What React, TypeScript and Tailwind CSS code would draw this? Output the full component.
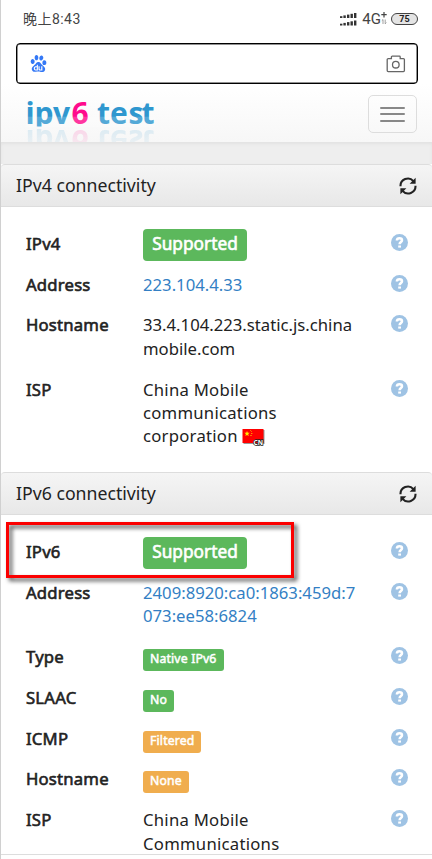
import { type ReactNode } from "react";
import { SiBaidu } from "react-icons/si";

interface RowProps {
  label: string;
  children: ReactNode;
}

function SignalBars() {
  const rows = [0, 7.5];
  return (
    <svg width="17" height="13" viewBox="0 0 17 13" fill="#333">
      {rows.map((y) => (
        <g key={y}>
          <rect x="0" y={y + 3.2} width="2.4" height="1.8" />
          <rect x="3.4" y={y + 2.4} width="2.4" height="2.6" />
          <rect x="7" y={y + 1.6} width="2.4" height="3.4" />
          <rect x="10.5" y={y + 0.8} width="2.4" height="4.2" />
          <rect x="14" y={y} width="2.4" height="5" />
        </g>
      ))}
    </svg>
  );
}

function CameraIcon() {
  return (
    <svg width="20" height="18" viewBox="0 0 20 18" fill="none" stroke="#666" strokeWidth="1.3">
      <path d="M2.2 3.600h3.200V2a.8.8 0 0 1 .8-.8h7.200a.8.8 0 0 1 .8.8v1.600h3.200a1 1 0 0 1 1 1v11a1 1 0 0 1-1 1H2.200a1 1 0 0 1-1-1v-11a1 1 0 0 1 1-1z" />
      <circle cx="9.800" cy="9.700" r="3.300" />
    </svg>
  );
}

function RefreshIcon() {
  return (
    <svg width="18" height="18" viewBox="0 0 18 18">
      <g fill="none" stroke="#222" strokeWidth="2.100">
        <path d="M1.500 9.200A7.300 7.300 0 0 1 14.400 4.200" />
        <path d="M16.500 8.800A7.300 7.300 0 0 1 3.600 13.800" />
      </g>
      <path d="M16.600 0.800v5.900h-6z" fill="#222" />
      <path d="M1.400 17.200v-5.900h6z" fill="#222" />
    </svg>
  );
}

function HelpIcon() {
  return (
    <svg width="17" height="17" viewBox="0 0 17 17">
      <circle cx="8.500" cy="8.500" r="8.500" fill="#9fc3e4" />
      <path d="M5.900 6.400C5.900 4.700 7 4.200 8.500 4.200C10.200 4.200 11 5 11 6.200C11 8 8.600 8 8.600 10.300" fill="none" stroke="#fff" strokeWidth="2.500" />
      <rect x="7.200" y="11.500" width="2.800" height="2.100" fill="#fff" />
    </svg>
  );
}

function Logo() {
  const letters = (
    <>
      <text x="-0.5 8.500 27" y="27.500">ipv</text>
      <text x="45.500" y="27.500" fill="#ff0a8c">6</text>
      <text x="71 84 102.500 115.500" y="27.500">test</text>
    </>
  );
  return (
    <svg width="129" height="46" viewBox="0 0 129 46" className="font-['Open_Sans'] text-[30px] font-bold">
      <defs>
        <linearGradient id="fade" x1="0" y1="32" x2="0" y2="46" gradientUnits="userSpaceOnUse">
          <stop offset="0" stopColor="#fff" stopOpacity="0.150" />
          <stop offset="1" stopColor="#fff" stopOpacity="0.070" />
        </linearGradient>
        <mask id="mirror" maskUnits="userSpaceOnUse" x="0" y="33" width="129" height="13">
          <rect y="33" width="129" height="13" fill="url(#fade)" />
        </mask>
        <clipPath id="top"><rect width="129" height="30.500" /></clipPath>
      </defs>
      <g clipPath="url(#top)" fill="#2f97cf">{letters}</g>
      <rect y="20.700" width="129" height="10.300" fill="#fff" fillOpacity="0.180" />
      <g mask="url(#mirror)" aria-hidden="true">
        <g transform="matrix(1 0 0 -1 0 61.500)" fill="#2f97cf">{letters}</g>
      </g>
    </svg>
  );
}

function Flag() {
  return (
    <svg width="24" height="18" viewBox="0 0 24 18" className="inline-block align-[-4px]">
      <rect x="1.500" y="2" width="21" height="14" fill="#999" />
      <rect x="0.500" y="1" width="21" height="14" fill="#f00" />
      <path d="M5 3l.8 1.700 1.900.1-1.500 1.200.5 1.900L5 6.900 3.400 7.900l.5-1.900L2.400 4.800l1.900-.1z" fill="#fe0" />
      <path d="M8.500 2.500l1 1M9.800 5v1M8.500 8l1-1" stroke="#fe0" strokeWidth="0.900" />
      <text x="11.500" y="16.500" fontSize="6.500" fontWeight="700" fill="#fff" stroke="#222" strokeWidth="1.600" paintOrder="stroke">CN</text>
    </svg>
  );
}

function Heading({ children }: { children: ReactNode }) {
  return (
    <div className="flex h-[43px] items-center justify-between rounded-t-[4px] border-y border-[#ddd] bg-linear-to-b from-[#f5f5f5] to-[#e8e8e8] px-[15px] text-[17.7px] text-[#222]">
      <h3>{children}</h3>
      <RefreshIcon />
    </div>
  );
}

function Row({ label, children }: RowProps) {
  return (
    <div className="flex min-h-[40.83px] items-start pt-[7.17px] pb-[10.33px]">
      <dt className="w-[117px] shrink-0 tracking-[0.2px] [-webkit-text-stroke:0.6px_#222]">{label}</dt>
      <dd className="w-[240px] shrink-0">{children}</dd>
      <div className="ml-2 pt-[2px]">
        <HelpIcon />
      </div>
    </div>
  );
}

function Words({ children }: { children: ReactNode }) {
  return <span className="tracking-[0.25px]">{children}</span>;
}

function Supported() {
  return (
    <span className="-mt-[3px] -mb-[6px] block h-8 w-[104px] rounded-[4px] bg-[#5cb85c] text-center text-[17.3px] leading-[30px] text-white [-webkit-text-stroke:0.6px_#fff]">
      Supported
    </span>
  );
}

function Label({ color, children }: { color: string; children: ReactNode }) {
  return (
    <span className={`mt-[4px] -mb-[3px] block h-[22px] w-fit rounded-[3px] px-[7px] text-[12.25px] leading-[19px] tracking-[0.15px] text-white [-webkit-text-stroke:0.5px_#fff] ${color}`}>
      {children}
    </span>
  );
}

export default function App() {
  return (
    <div className="relative h-[859px] w-[432px] overflow-hidden border-l border-[#d0d0d0] bg-white font-['Noto_Sans','Noto_Sans_CJK_SC',sans-serif] text-[16.7px] leading-[23.33px] text-[#222]">
      <div className="flex h-[43px] items-center justify-between pr-[14px] pb-[4px] pl-[22px] text-[#444]">
        <span className="font-['Roboto','Noto_Sans_CJK_SC',sans-serif] text-[14px] tracking-[0.45px]">晚上8:43</span>
        <div className="flex items-center">
          <SignalBars />
          <span className="ml-[5px] font-['Roboto',sans-serif] text-[15px]">4G</span>
          <svg width="6" height="14" viewBox="0 0 6 14" className="mr-[4px]" fill="none" stroke="#444">
            <path d="M3 0v5.500M.3 2.700h5.400" strokeWidth="1.200" />
            <path d="M2 12V7.500L.8 8.700M4.200 7.500v4.300l1.200-1.200" stroke="#888" strokeWidth="0.800" />
          </svg>
          <span className="h-[12px] w-[27px] rounded-full border border-[#444] bg-[#e4e4e4] text-center font-['Roboto',sans-serif] text-[9px] leading-[10.5px] font-bold text-[#222]">75</span>
        </div>
      </div>

      <div className="mr-[14px] ml-[15px] flex h-[41px] items-center justify-between rounded-[4px] border border-black pr-[11px] pl-[13px] shadow-[inset_0_0_0_0.5px_#222]">
        <SiBaidu size={17} color="#3478f6" />
        <CameraIcon />
      </div>

      <header className="flex h-[58px] items-start justify-between bg-linear-to-b from-white to-[#f7f7f7] pt-[11px] pr-[15px] pl-[25px]">
        <div className="mt-[1px]">
          <Logo />
        </div>
        <button className="flex h-[38px] w-[49px] flex-col items-center justify-center gap-[4.5px] rounded-[5px] border border-[#ddd]">
          <span className="h-[2px] w-[25px] rounded-full bg-[#888]" />
          <span className="h-[2px] w-[25px] rounded-full bg-[#888]" />
          <span className="h-[2px] w-[25px] rounded-full bg-[#888]" />
        </button>
      </header>
      <div className="h-[22px] bg-[#eee] shadow-[inset_0_2px_3px_#e2e2e2]" />

      <section className="h-[308px] bg-white">
        <Heading>IPv4 connectivity</Heading>
        <dl className="pt-[17.6px] pl-[25px]">
          <Row label="IPv4"><Supported /></Row>
          <Row label="Address"><a className="text-[#337fc4]">223.104.4.33</a></Row>
          <Row label="Hostname">33.4.104.223.static.js.china<br />mobile.com</Row>
          <Row label="ISP"><Words>China Mobile<br />communications<br />corporation</Words> <Flag /></Row>
        </dl>
      </section>

      <section className="h-[383px] border-b border-[#ddd]">
        <Heading>IPv6 connectivity</Heading>
        <dl className="pt-[17.8px] pl-[25px]">
          <Row label="IPv6"><Supported /></Row>
          <Row label="Address"><a className="text-[#337fc4]">2409:8920:ca0:1863:459d:7<br />073:ee58:6824</a></Row>
          <Row label="Type"><Label color="bg-[#5cb85c]">Native IPv6</Label></Row>
          <Row label="SLAAC"><Label color="bg-[#5cb85c]">No</Label></Row>
          <Row label="ICMP"><Label color="bg-[#f0ad4e]">Filtered</Label></Row>
          <Row label="Hostname"><Label color="bg-[#f0ad4e]">None</Label></Row>
          <Row label="ISP"><Words>China Mobile<br />Communications</Words></Row>
        </dl>
      </section>

      {/* highlight frame over the IPv6 row */}
      <div className="absolute top-[522px] left-[5px] h-[56px] w-[288px] border-3 border-[#fb0000] drop-shadow-[3px_3px_2px_rgba(0,0,0,0.7)]" />
    </div>
  );
}
